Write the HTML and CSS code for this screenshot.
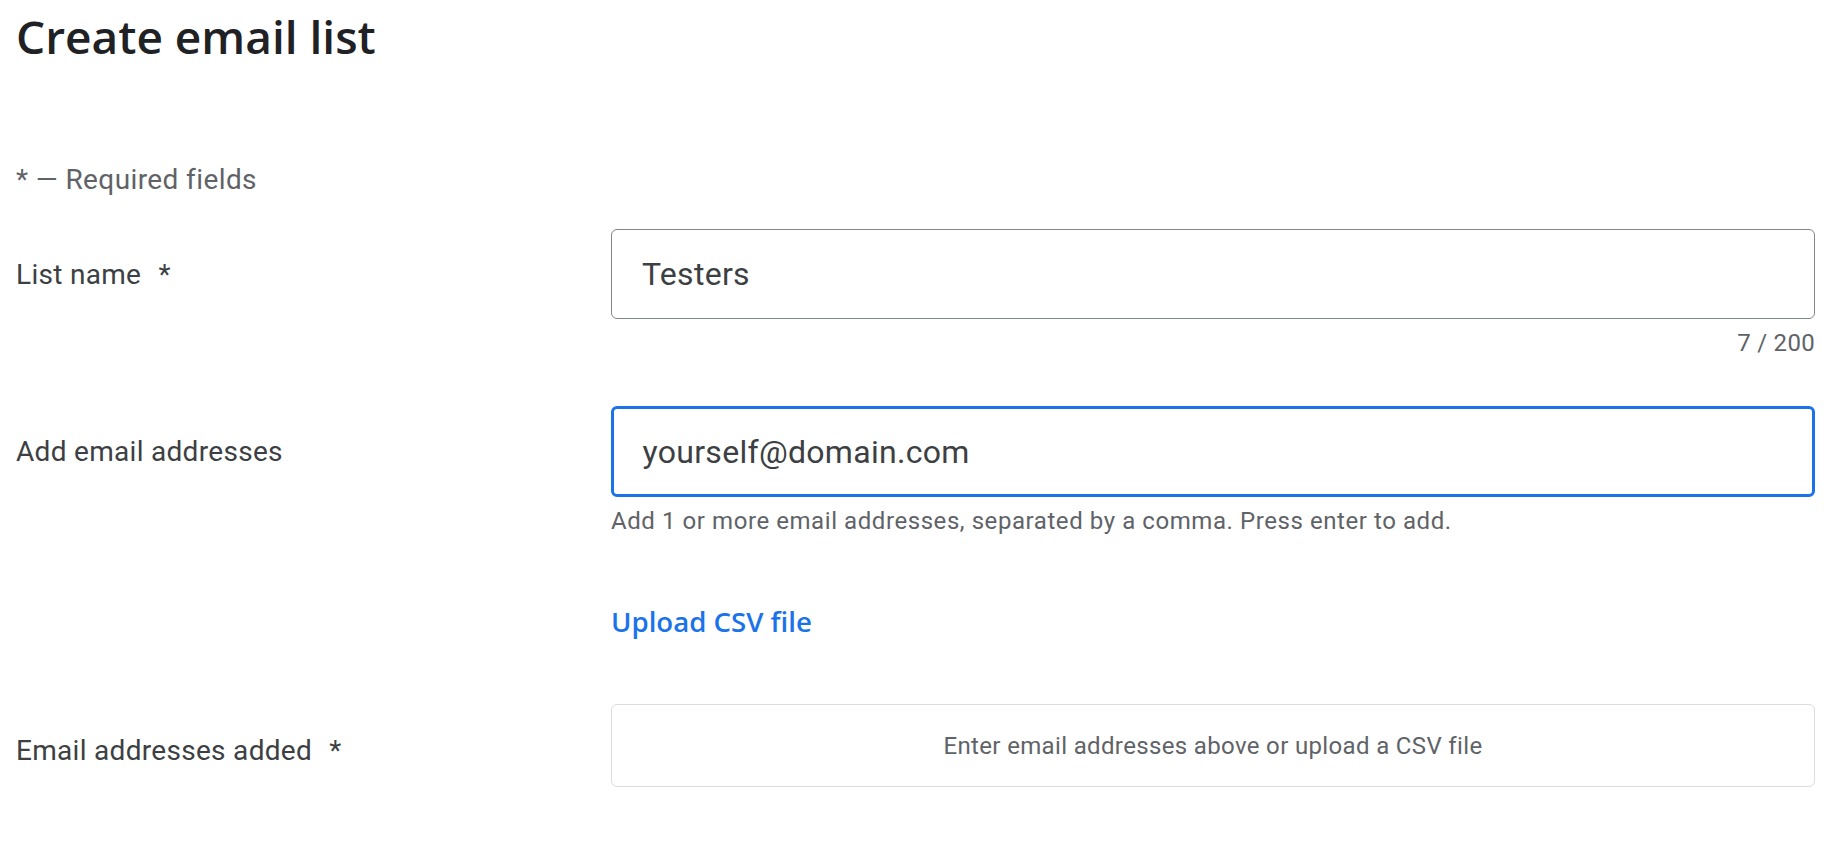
FILE: index.html
```html
<!DOCTYPE html>
<html lang="en">
<head>
<meta charset="utf-8">
<title>Create email list</title>
<link rel="stylesheet" href="styles.css">
</head>
<body>
<main class="page">
  <h1 class="title">Create email list</h1>
  <p class="required-note">* — Required fields</p>

  <div class="form-row row-name">
    <label class="field-label">List name <span class="req">*</span></label>
    <div class="field">
      <div class="text-input">Testers</div>
      <div class="counter">7 / 200</div>
    </div>
  </div>

  <div class="form-row row-emails">
    <label class="field-label">Add email addresses</label>
    <div class="field">
      <div class="text-input focused">yourself@domain.com</div>
      <div class="helper">Add 1 or more email addresses, separated by a comma. Press enter to add.</div>
      <a class="upload-link" href="#">Upload CSV file</a>
    </div>
  </div>

  <div class="form-row row-added">
    <label class="field-label added-label">Email addresses added <span class="req">*</span></label>
    <div class="field">
      <div class="empty-box">Enter email addresses above or upload a CSV file</div>
    </div>
  </div>
</main>
</body>
</html>
```

FILE: styles.css
```css
html, body {
  margin: 0;
  padding: 0;
  background: #ffffff;
}

body {
  font-family: Roboto, "Liberation Sans", Arial, sans-serif;
  color: #3c4043;
}

.page {
  padding: 0 33px 0 16px;
}

.title {
  margin: 0;
  padding-top: 6px;
  font-family: "Open Sans", Roboto, sans-serif;
  font-weight: 600;
  font-size: 46px;
  line-height: 60px;
  color: #202124;
  letter-spacing: 0;
}

.required-note {
  margin: 94px 0 0 0;
  font-size: 28px;
  line-height: 40px;
  color: #5f6368;
  letter-spacing: 0.4px;
}

.form-row {
  display: grid;
  grid-template-columns: 595px 1fr;
  align-items: start;
}

.row-name {
  margin-top: 29px;
}

.row-emails {
  margin-top: 47px;
}

.row-added {
  margin-top: 63px;
  align-items: center;
}

.field-label {
  font-size: 28px;
  line-height: 40px;
  color: #3c4043;
  padding-top: 26px;
  letter-spacing: 0.3px;
}

.added-label {
  padding-top: 10px;
}

.req {
  margin-left: 10px;
}

.field {
  display: flex;
  flex-direction: column;
}

.text-input {
  box-sizing: border-box;
  height: 90px;
  border: 1.5px solid #80868b;
  border-radius: 6px;
  padding: 0 30px;
  display: flex;
  align-items: center;
  font-size: 32px;
  color: #3c4043;
  letter-spacing: 0.3px;
}

.text-input.focused {
  height: 91px;
  border: 3px solid #1a73e8;
  padding: 0 28.5px;
}

.counter {
  align-self: flex-end;
  margin-top: 8px;
  font-size: 24px;
  line-height: 32px;
  color: #5f6368;
  letter-spacing: 0.3px;
}

.helper {
  margin-top: 8px;
  font-size: 24px;
  line-height: 32px;
  color: #5f6368;
  letter-spacing: 0.57px;
}

.upload-link {
  align-self: flex-start;
  margin-top: 64px;
  font-family: "Open Sans", Roboto, sans-serif;
  font-weight: 600;
  font-size: 27.6px;
  line-height: 40px;
  color: #1a73e8;
  text-decoration: none;
}

.empty-box {
  box-sizing: border-box;
  height: 83px;
  border: 1.5px solid #dadce0;
  border-radius: 6px;
  display: flex;
  align-items: center;
  justify-content: center;
  font-size: 24px;
  color: #5f6368;
  letter-spacing: 0.35px;
}
```
